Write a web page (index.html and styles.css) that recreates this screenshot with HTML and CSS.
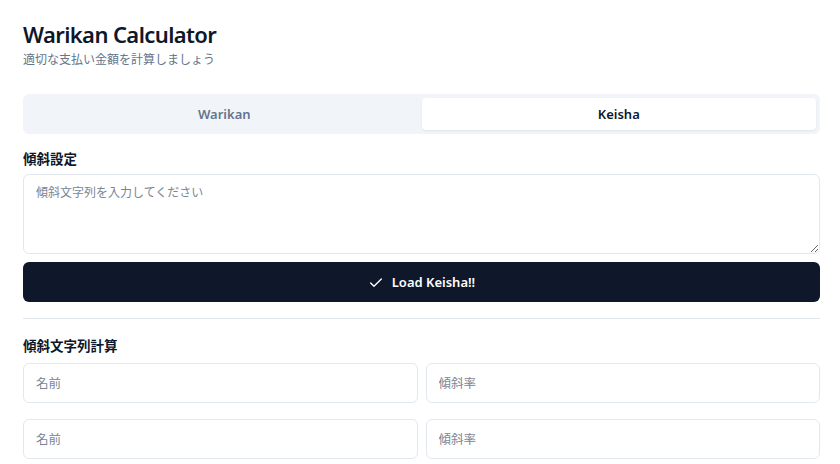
FILE: index.html
```html
<!DOCTYPE html>
<html lang="ja">
<head>
<meta charset="utf-8">
<title>Warikan Calculator</title>
<link rel="stylesheet" href="styles.css">
</head>
<body>
<main class="page">
  <header class="header">
    <h1 class="title">Warikan Calculator</h1>
    <p class="subtitle">適切な支払い金額を計算しましょう</p>
  </header>

  <div class="tabs">
    <button class="tab">Warikan</button>
    <button class="tab tab-active">Keisha</button>
  </div>

  <section class="section">
    <label class="label">傾斜設定</label>
    <textarea class="textarea" placeholder="傾斜文字列を入力してください"></textarea>
    <button class="primary">
      <svg class="check" width="16" height="16" viewBox="0 0 24 24" fill="none" stroke="currentColor" stroke-width="2" stroke-linecap="round" stroke-linejoin="round"><path d="M20 6 9 17l-5-5"/></svg>
      <span>Load Keisha!!</span>
    </button>
  </section>

  <hr class="divider">

  <section class="section calc">
    <label class="label">傾斜文字列計算</label>
    <div class="rows">
      <div class="row">
        <input class="input" placeholder="名前">
        <input class="input" placeholder="傾斜率">
      </div>
      <div class="row">
        <input class="input" placeholder="名前">
        <input class="input" placeholder="傾斜率">
      </div>
    </div>
  </section>
</main>
</body>
</html>
```

FILE: styles.css
```css
* { box-sizing: border-box; }

html, body {
  margin: 0;
  background: #ffffff;
  font-family: "Noto Sans", "Noto Sans CJK JP", sans-serif;
  color: #0f172a;
}

.page {
  padding: 18px 20px 0 23px;
  display: flex;
  flex-direction: column;
}

.header { margin-bottom: 24px; }

.title {
  margin: 0;
  font-size: 22px;
  font-weight: 600;
  line-height: 32px;
  letter-spacing: -0.6px;
  color: #0f172a;
}

.subtitle {
  margin: 0;
  font-size: 12px;
  line-height: 20px;
  color: #64748b;
}

.tabs {
  display: grid;
  grid-template-columns: 1fr 1fr;
  background: #f1f5f9;
  border-radius: 6px;
  padding: 4px;
  height: 40px;
}

.tab {
  border: 0;
  background: transparent;
  font-family: inherit;
  font-size: 13px;
  font-weight: 600;
  color: #64748b;
  border-radius: 4px;
  cursor: pointer;
}

.tab-active {
  background: #ffffff;
  color: #0f172a;
  box-shadow: 0 1px 2px rgba(15, 23, 42, 0.08);
}

.section {
  display: flex;
  flex-direction: column;
  margin-top: 17px;
}

.label {
  font-size: 13.5px;
  font-weight: 600;
  line-height: 16px;
  margin-bottom: 7px;
}

.textarea {
  height: 80px;
  border: 1px solid #e2e8f0;
  border-radius: 6px;
  padding: 8px 12px;
  font-family: inherit;
  font-size: 12px;
  line-height: 20px;
  resize: vertical;
  color: #0f172a;
}

.textarea::placeholder,
.input::placeholder { color: #7b8595; }

.primary {
  margin-top: 8px;
  height: 40px;
  border: 0;
  border-radius: 6px;
  background: #0f172a;
  color: #ffffff;
  font-family: inherit;
  font-size: 13px;
  font-weight: 600;
  display: flex;
  align-items: center;
  justify-content: center;
  gap: 8px;
  cursor: pointer;
}

.check { margin-top: 1px; }

.divider {
  border: 0;
  border-top: 1px solid #e2e8f0;
  margin: 16px 0 0 0;
}

.calc { margin-top: 19px; }

.rows {
  display: flex;
  flex-direction: column;
  gap: 16px;
  margin-top: 2px;
}

.row {
  display: grid;
  grid-template-columns: 1fr 1fr;
  gap: 8px;
}

.input {
  height: 40px;
  border: 1px solid #e2e8f0;
  border-radius: 6px;
  padding: 0 12px;
  font-family: inherit;
  font-size: 12.5px;
  color: #0f172a;
  min-width: 0;
}
```
